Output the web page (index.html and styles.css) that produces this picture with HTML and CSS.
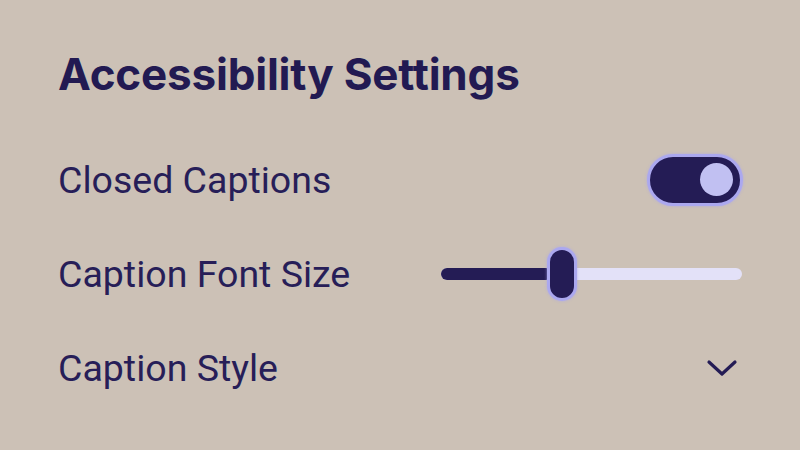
FILE: index.html
```html
<!DOCTYPE html>
<html lang="en">
<head>
    <meta charset="UTF-8">
    <meta name="viewport" content="width=device-width, initial-scale=1.0">
    <title>Accessibility Settings</title>
    <link rel="stylesheet" href="styles.css">
</head>
<body>
    <div class="settings">
        <h1>Accessibility Settings</h1>
        <div class="row">
            <span class="label">Closed Captions</span>
            <div class="toggle on">
                <span class="knob"></span>
            </div>
        </div>
        <div class="row">
            <span class="label">Caption Font Size</span>
            <div class="slider">
                <div class="fill" style="width: 37%;"></div>
                <span class="thumb"></span>
            </div>
        </div>
        <div class="row">
            <span class="label">Caption Style</span>
            <svg class="chevron" width="32" height="18" viewBox="0 0 32 18">
                <path d="M3 3 L16 15 L29 3" fill="none" stroke="#241c55" stroke-width="3.2" stroke-linecap="round" stroke-linejoin="round"/>
            </svg>
        </div>
    </div>
</body>
</html>
```

FILE: styles.css
```css
* {
    box-sizing: border-box;
    margin: 0;
    padding: 0;
}
body {
    background-color: #ccc1b6;
    font-family: Roboto, "Noto Sans", sans-serif;
    color: #221a52;
    width: 800px;
    height: 450px;
    overflow: hidden;
}
.settings {
    padding: 44px 58px 0 58px;
}
h1 {
    font-family: Inter, Roboto, sans-serif;
    font-size: 44px;
    font-weight: 700;
    line-height: 60px;
    letter-spacing: -0.2px;
    margin-bottom: 29px;
}
.row {
    display: flex;
    justify-content: space-between;
    align-items: center;
    height: 95px;
    margin-top: -1px;
}
.label {
    font-size: 37.5px;
    font-weight: 400;
    color: #271e58;
}
/* switch: dark track, light knob parked on the right when on */
.toggle {
    width: 96px;
    height: 52px;
    border-radius: 26px;
    background-color: #241c55;
    border: 3px solid #aba8ef;
    box-shadow: 0 0 3px rgba(171, 168, 239, 0.8);
    display: flex;
    align-items: center;
    justify-content: flex-end;
    padding-right: 7px;
    margin-right: -1px;
}
.knob {
    width: 33px;
    height: 33px;
    border-radius: 50%;
    background-color: #c1c0f2;
}
.slider {
    position: relative;
    width: 301px;
    height: 12px;
    border-radius: 6px;
    background-color: #e3e1f8;
}
.fill {
    height: 100%;
    border-radius: 6px;
    background-color: #241c55;
}
.thumb {
    position: absolute;
    left: 106px;
    top: -21px;
    width: 30px;
    height: 54px;
    border-radius: 15px;
    background-color: #241c55;
    border: 3px solid #aba8ef;
    box-shadow: 0 0 3px rgba(171, 168, 239, 0.8);
}
.chevron {
    margin-right: 4px;
}
```
